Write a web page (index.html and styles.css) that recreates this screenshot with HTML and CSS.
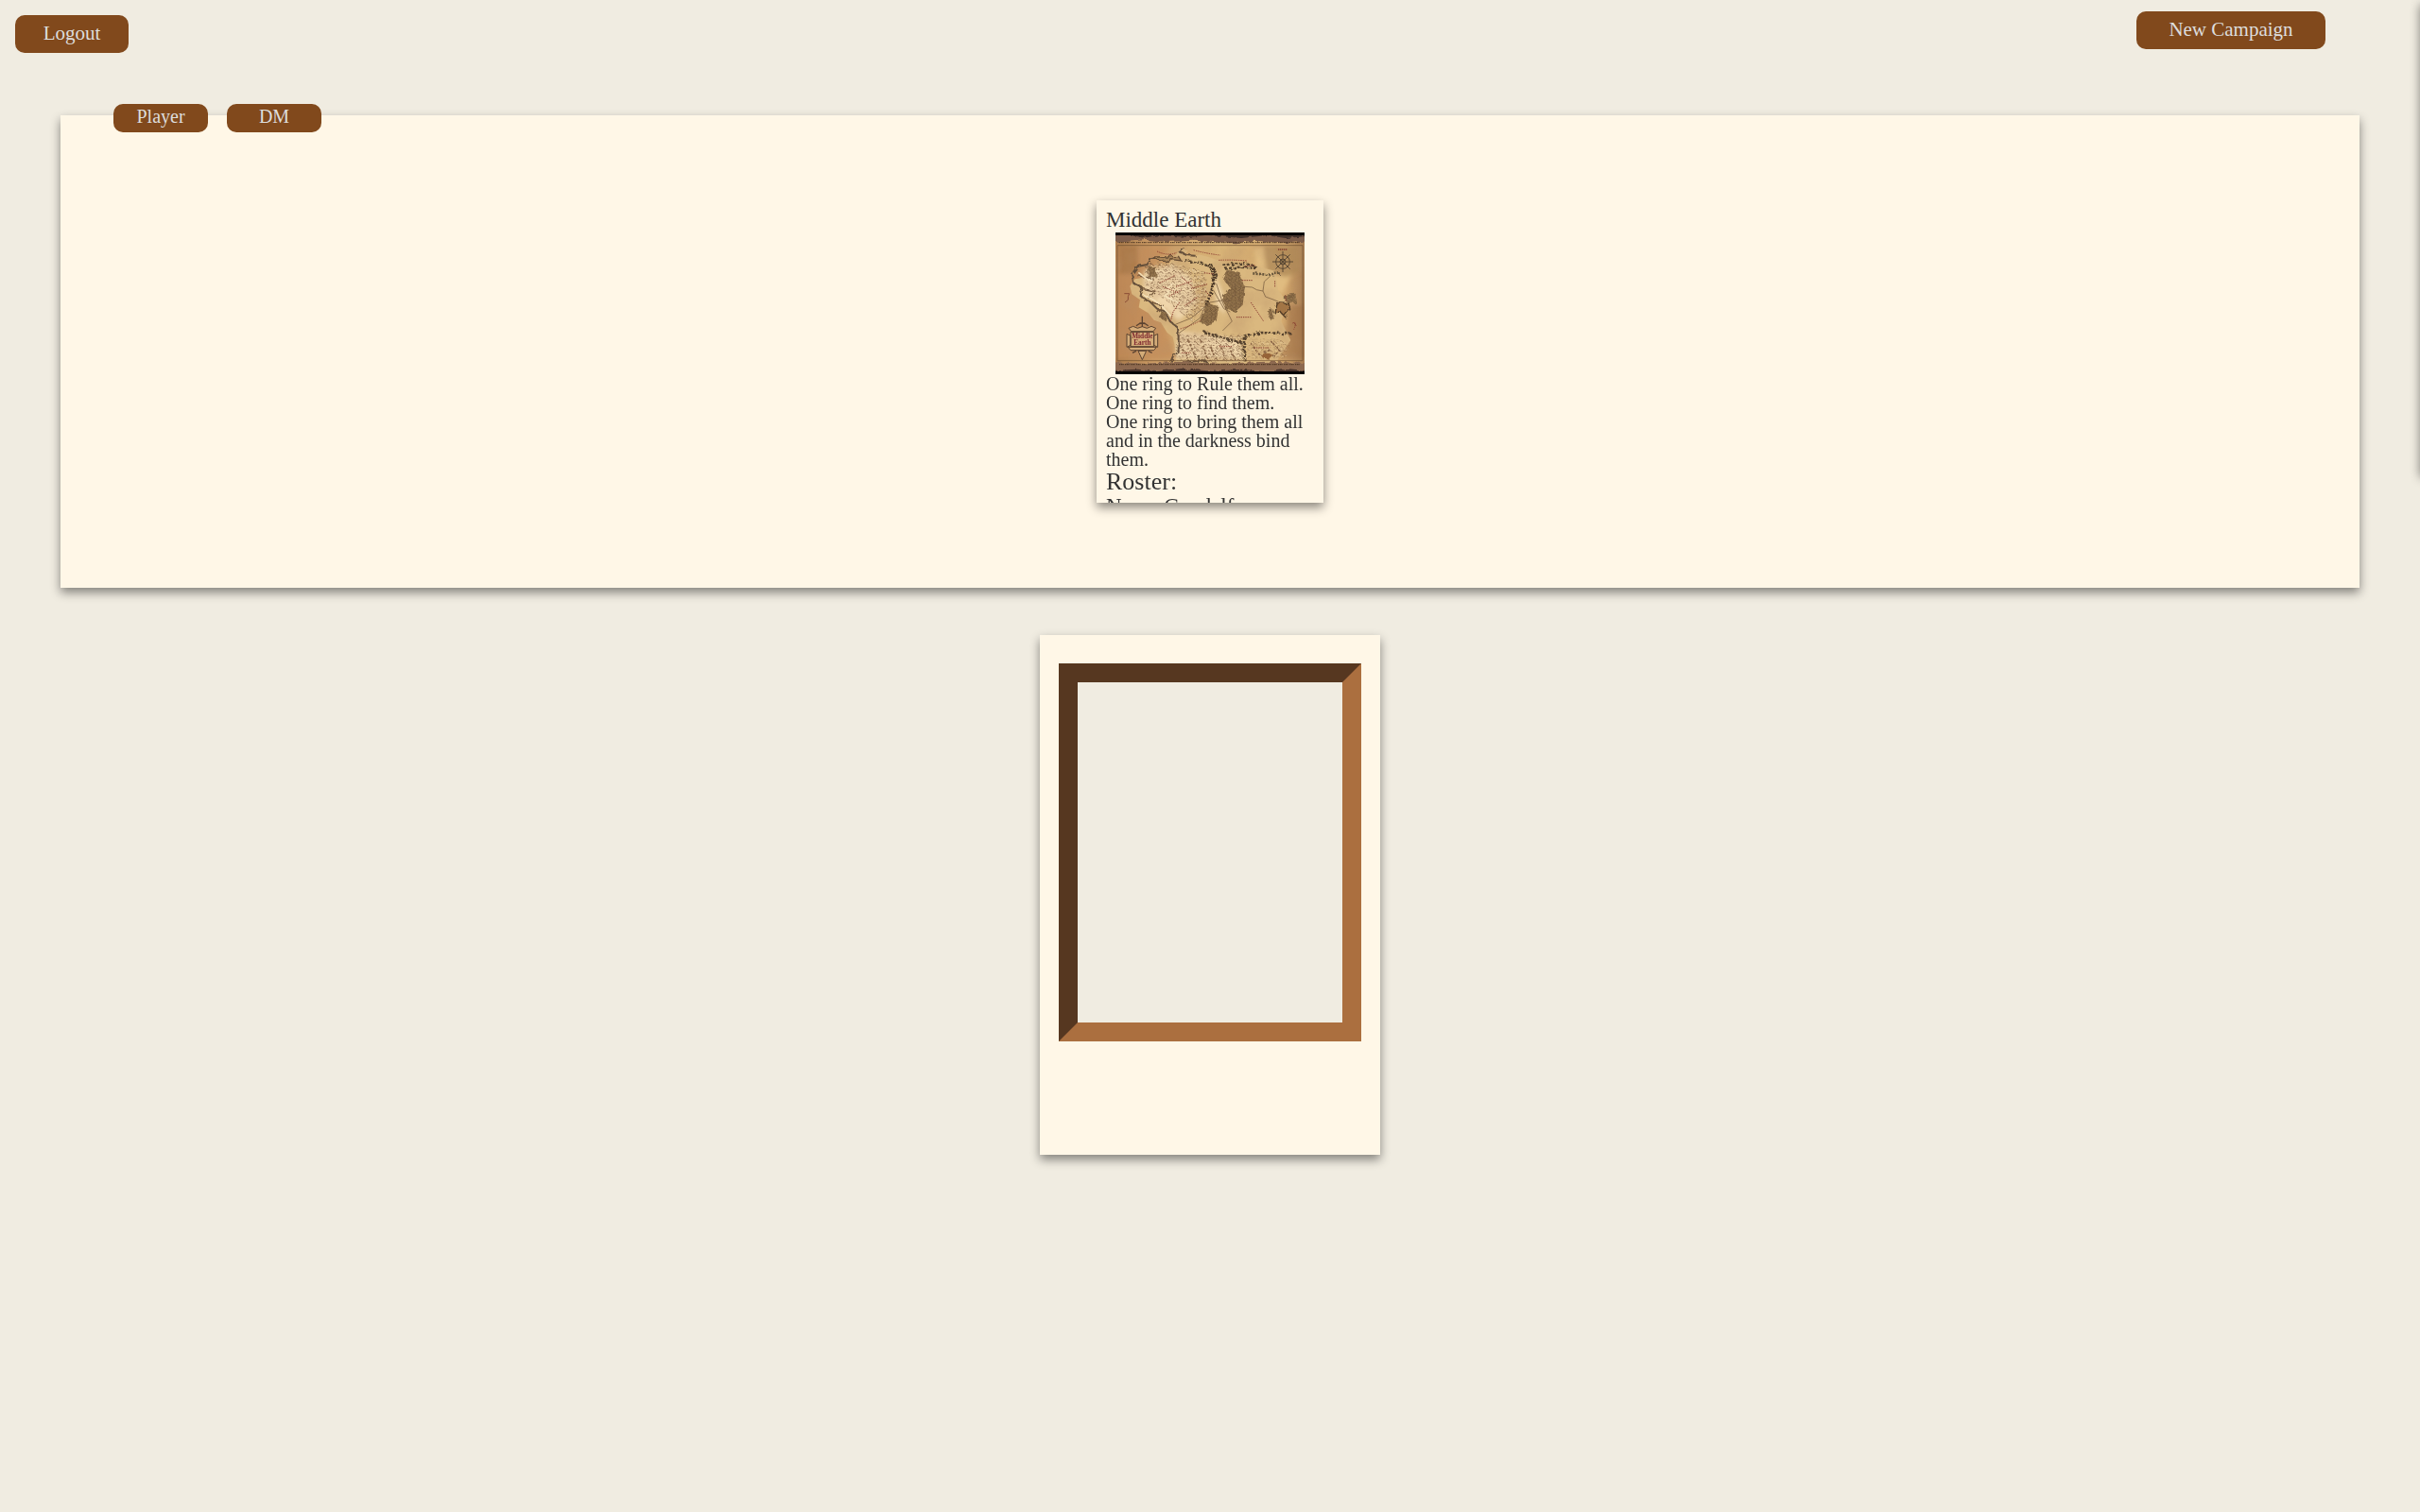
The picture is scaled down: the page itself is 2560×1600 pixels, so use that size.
FILE: index.html
```html
<!DOCTYPE html>
<html lang="en">
<head>
<meta charset="utf-8">
<title>Campaigns</title>
<link rel="stylesheet" href="styles.css">
</head>
<body>
<header class="topbar">
  <button class="btn logout" type="button">Logout</button>
  <button class="btn new-campaign" type="button">New Campaign</button>
</header>
<main class="main">
  <section class="panel">
    <nav class="tabs">
      <button class="btn tab" type="button">Player</button>
      <button class="btn tab" type="button">DM</button>
    </nav>
    <article class="card">
      <h2 class="card-title">Middle Earth</h2>
      <svg class="map" viewBox="30 18 600 450" role="img" aria-label="Map of Middle Earth">
        <defs>
          <linearGradient id="paper" x1="0" x2="1" y1="0" y2="0">
            <stop offset="0" stop-color="#ab7c4c"/><stop offset=".2" stop-color="#cb9c66"/>
            <stop offset=".55" stop-color="#d8b377"/><stop offset=".9" stop-color="#d0a56c"/><stop offset="1" stop-color="#a67b50"/>
          </linearGradient>
          <filter id="mottle" x="0" y="0" width="1" height="1">
            <feTurbulence type="fractalNoise" baseFrequency=".015" numOctaves="4" seed="4"/>
            <feColorMatrix values="0 0 0 0 .48  0 0 0 0 .28  0 0 0 0 .14  1.8 0 0 0 -.7"/>
          </filter>
          <filter id="rough" x="-.1" y="-.1" width="1.2" height="1.2">
            <feTurbulence type="fractalNoise" baseFrequency=".06" numOctaves="2" seed="9"/>
            <feDisplacementMap in="SourceGraphic" scale="16"/>
          </filter>
          <filter id="soft"><feGaussianBlur stdDeviation="7"/></filter>
          <pattern id="wood" width="13" height="11" patternUnits="userSpaceOnUse">
            <rect width="13" height="11" fill="#94744c"/>
            <path d="M1 5q3-5 5 0M7 10q3-5 5 0M7 3l3-2" stroke="#574029" stroke-width="2.4" fill="none"/>
          </pattern>
          <pattern id="hills" width="23" height="19" patternUnits="userSpaceOnUse">
            <path d="M1 8l5-6 5 6M12 17l4-6 5 5M15 5l5 1M3 14l5 2" stroke="#76543a" stroke-width="2.4" fill="none"/>
            <path d="M2 11l8-1M14 9l5-4" stroke="#f0d8ac" stroke-width="3"/>
          </pattern>
        </defs>
        <rect x="30" y="18" width="600" height="450" fill="url(#paper)"/>
        <g filter="url(#soft)">
          <path d="M30 60h180l-110 110 90 150 30 100H30z" fill="#c38b59" opacity=".7"/>
          <path d="M470 65h60l60 80-30 70-80-20z" fill="#e0bc80"/>
          <path d="M500 60h120v80l-50 20-60-20z" fill="#ae8855" opacity=".8"/>
          <path d="M40 60h60v90H40zM580 250h50v170h-70z" fill="#9c6c40" opacity=".5"/>
          <path d="M420 270l90-20 60 60-60 20z" fill="#dfb777"/>
        </g>
        <path d="M238 68l22 8-12 14 30 6 18-8 30 8 50 18 80 6 80 20 10 60 30 40-20 60 30 60-40 60-20 60H230l-34-6 8-22 18-16-2-50-8-36-18-14-20-32-22-8-18-22-30-18 4-24-26-18-6-26 16-22 24-4 10-22 24-10 36 8 24-6-10-16z" fill="#dab87f"/>
        <g filter="url(#soft)" fill="#efd5aa">
          <path d="M120 140l90-20 60 40 20 80-60 60-60-50-50-40z"/>
          <path d="M230 330l80 10 110 20 20 60H220z"/><path d="M345 150l25 60 10 70-30-30z"/>
        </g>
        <rect x="30" y="60" width="600" height="366" filter="url(#mottle)" opacity=".4"/>
        <path d="M125 120l50-10 70 15 70 15 5 110-50 50-65-55-80-60zM225 340l210 0 10 85H220z" fill="url(#hills)" filter="url(#rough)"/>
        <path d="M448 358l90-6 46 24-20 44H448z" fill="url(#hills)" filter="url(#rough)" opacity=".55"/>
        <g filter="url(#rough)">
          <path d="M248 68l-14 12 22 10 28 2M214 104l-36-8-34 6-14 18-30 6-18 24 6 30 28 14-6 26 32 20 20 20 24 8 18 34 20 14 6 32v50l-18 14-10 24 34 6 30-14 48-4 18 22" fill="none" stroke="#65503a" stroke-width="6"/>
          <path d="M150 96q30 22 60 8l28 4-8-14-40 2z" fill="#a98558" stroke="#674e35" stroke-width="4"/>
          <path d="M110 195l44 10-30 34M145 240l36 10-20 20M100 155l50 10" fill="none" stroke="#72563a" stroke-width="4"/>
          <path d="M106 148l30 22 20-14M116 214l50 26M176 250l30 34M210 180l-24 40 40 20" fill="none" stroke="#f3dfb8" stroke-width="5"/>
          <path d="M384 136l40 8 16 50-6 54-24 22-34-10-4-40 18-30-20-28z" fill="url(#wood)"/>
          <path d="M324 240l34 14-8 46-32 12-22-8 12-34z" fill="url(#wood)"/>
          <path d="M132 122l26 8 4 34-28-6zM175 268l18 4-4 26-18-6z" fill="url(#wood)"/>
          <path d="M332 118l10 40-6 42-20 54M340 130l10 24-14 44" fill="none" stroke="#4b3927" stroke-width="9" stroke-dasharray="7 3"/>
          <path d="M250 108l50 6 30 14M370 122l46-6 44 4 20 12-64-4-40 6" fill="none" stroke="#54432e" stroke-width="7" stroke-dasharray="9 4"/>
          <path d="M466 148l44 4 44-4" fill="none" stroke="#66543a" stroke-width="8" stroke-dasharray="6 4"/>
          <path d="M310 334l44 14 52 16 32 4M438 350v76M440 350l50-14 104 4" fill="none" stroke="#56432e" stroke-width="8" stroke-dasharray="9 4"/>
          <path d="M240 380l20 40M262 360l24 60M300 360l22 60M332 380l20 46M360 370l20 50M390 380l18 40M460 370l30 40 30-20M520 360l30 30-20 26" fill="none" stroke="#886445" stroke-width="5" stroke-dasharray="8 5"/>
          <path d="M568 216l34-4v26l-18 8-10-6-8-10zM512 268l16-6 6 30-14 2z" fill="url(#wood)"/>
          <path d="M540 242l40 2 4 18-18 22-12-14-20 2z" fill="#a27444" stroke="#513b25" stroke-width="4"/>
          <path d="M492 406q20-10 40 4l-10 10-24-4z" fill="#966437"/>
        </g>
        <g fill="none" stroke="#7d6243" stroke-width="2.4">
          <path d="M440 190l24 2 14 8 20 4 8 18 22 8 20 8M498 204l4-30 22-20M350 180l20 60 20 40 10 20-30 30M340 200l34 60 20 10M220 310l50-20 60-50 60-10M228 340l70-50 20-44"/>
        </g>
        <g fill="none" stroke="#8c3f32" stroke-width="3" stroke-dasharray="4 3">
          <path d="M162 78q34 16 62 4M278 74q46 12 84 16M358 106q42-2 90 2M170 178l30-14 20-10M222 190l50-18M240 160l34 30M200 220l40-20M270 196l52-14M250 250l40-26M205 300l8-30 20-30M236 324q40-12 66-28M440 126l34-4M432 170h34M414 287h46M460 240l40 60M312 146l30 4M180 190l50 20M316 205l20 20M360 380h40M470 384h50M240 400h30M536 172v20M570 218v18M592 306q16-8 4 20"/>
        </g>
        <path d="M58 212h16q-6 8-4 20l-10 8M596 304l8 10" fill="none" stroke="#8a4c35" stroke-width="3"/>
        <g fill="none" stroke="#5b4934" stroke-width="3">
          <circle cx="561" cy="111" r="22"/><circle cx="561" cy="111" r="9"/>
          <path d="M561 78v66M528 111h66M538 88l46 46M584 88l-46 46"/>
          <path d="M546 72h30" stroke="#813f30" stroke-dasharray="4 2" stroke-width="5"/>
        </g>
        <g stroke="#5b4331" stroke-width="3" fill="#d4ac78">
          <path d="M78 334h74v46H78zM66 340l12 6v30l-12 6zM164 340l-12 6v30l12 6z"/>
          <path d="M72 322l14-6 14 6 15-5 15 5 14-6 14 6-8 10H80zM70 382h90l-8 10h-74zM102 394h26l-13 28z"/>
          <path d="M115 284v34M106 306h18M84 400l12-6M134 394l12 6M96 314q19-16 38 0" fill="none" stroke-width="4"/>
        </g>
        <g class="map-name">
          <text x="115" y="354">Middle</text>
          <text x="115" y="375">Earth</text>
        </g>
        <g filter="url(#rough)">
          <path d="M20 8h620v38l-60 6-110-8-60 8-130-8-90 4-60-6-70 6H20z" fill="#7b5b48"/>
          <path d="M20 8h620v22l-70 6-60-9-80 9-110-10-60 7-90-6-50 8-40-9H20z" fill="#43302a"/>
          <path d="M20 430l100 4 110-6 130 6 150-6 130 4v46H20z" fill="#8d694f"/>
          <path d="M20 456l80-4 60 7 80-9 100 8 90-6 80 8 60-7 70 6v25H20z" fill="#46332b"/>
        </g>
        <path d="M30 18h600v9H30zM30 459h600v9H30z" fill="#050303"/>
        <path d="M42 50h574M42 437h574" stroke="#49331f" stroke-width="3" stroke-dasharray="3 2 6 2 2 3" fill="none"/>
        <path d="M36 59h588v366H36z" fill="none" stroke="#6b4c2e" stroke-width="2"/>
      </svg>
      <p class="card-text">One ring to Rule them all.<br>One ring to find them.<br>One ring to bring them all and in the darkness bind them.</p>
      <h1 class="roster-title">Roster:</h1>
      <p class="roster-name">Name:Gandalf</p>
    </article>
  </section>
  <section class="polaroid">
    <div class="frame"></div>
  </section>
</main>
<aside class="drawer"></aside>
</body>
</html>
```
FILE: styles.css
```css
* { box-sizing: border-box; }
body {
  margin: 0;
  min-height: 100vh;
  overflow: hidden;
  background: #f0ece1;
  color: #333;
  font-family: "Liberation Serif", serif;
}
h1, h2, p { margin: 0; font-weight: 400; }
.topbar {
  display: flex;
  justify-content: space-between;
  align-items: flex-start;
  height: 122px;
  padding: 12px 100px 0 16px;
}
.btn {
  padding: 0 0 2px;
  border: 0;
  border-radius: 10px;
  background: #81491c;
  color: #ddd;
  font-family: inherit;
  font-size: 21px;
  line-height: 24px;
}
.logout { width: 120px; height: 40px; margin-top: 4px; }
.new-campaign { width: 200px; height: 40px; }
.panel, .card, .polaroid, .drawer {
  background: #fff7e7;
  box-shadow: 0 5px 10px rgba(0, 0, 0, .45);
}
.panel {
  position: relative;
  display: flex;
  justify-content: center;
  align-items: center;
  height: 500px;
  margin: 0 64px;
}
.tabs {
  position: absolute;
  top: -12px;
  left: 56px;
  display: flex;
  gap: 20px;
}
.tab { width: 100px; height: 30px; padding-bottom: 4px; font-size: 20px; }
.card {
  width: 240px;
  height: 320px;
  padding: 10px;
  overflow: hidden;
}
.card-title { font-size: 23px; line-height: 22px; padding-bottom: 2px; }
.map { display: block; width: 200px; height: 150px; margin: 0 auto; }
.map-name {
  fill: #7d2830;
  font-size: 22px;
  font-weight: 700;
  text-anchor: middle;
}
.card-text { font-size: 20px; line-height: 20px; }
.roster-title { font-size: 26px; line-height: 28px; }
.roster-name { font-size: 23px; line-height: 24px; }
.polaroid {
  width: 360px;
  height: 550px;
  margin: 50px auto 0;
  padding: 30px 20px;
}
.frame {
  height: 400px;
  border: 20px solid;
  border-color: #563720 #ab6f3f #ab6f3f #563720;
  background: #f0ece1;
}
.drawer {
  position: fixed;
  top: 0;
  left: 100%;
  width: 400px;
  height: 500px;
}
```
